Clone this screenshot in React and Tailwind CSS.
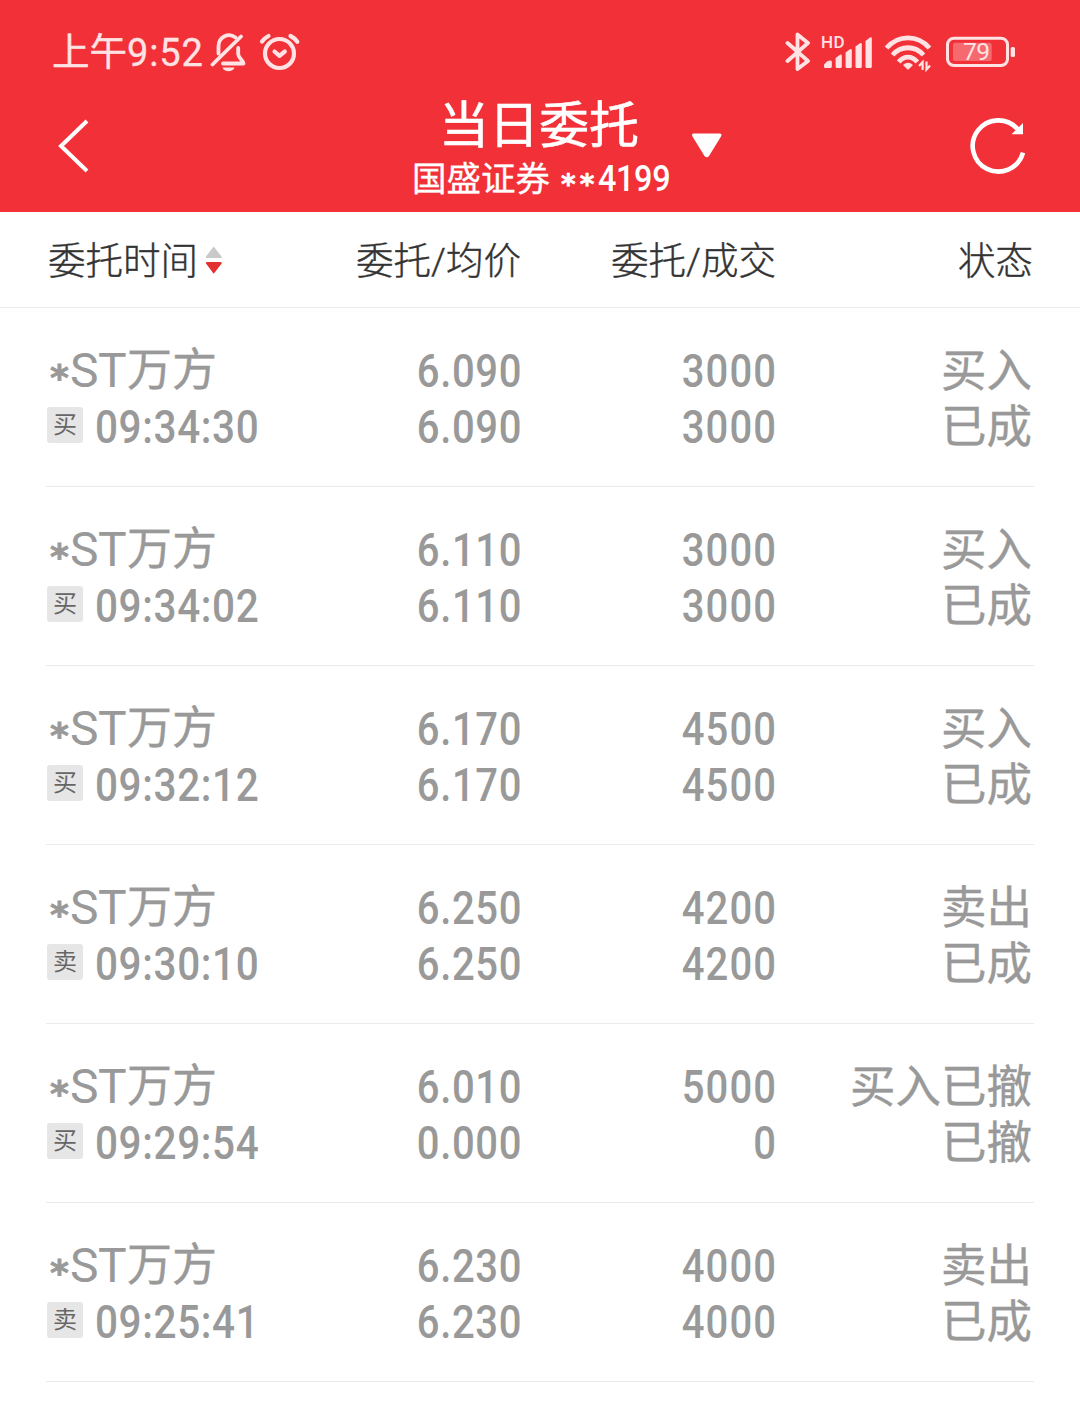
const orders = [
  { prefix: "ST", name: "万方", tag: "买", time: "09:34:30", price: "6.090", avg: "6.090", amount: "3000", filled: "3000", side: "买入", status: "已成" },
  { prefix: "ST", name: "万方", tag: "买", time: "09:34:02", price: "6.110", avg: "6.110", amount: "3000", filled: "3000", side: "买入", status: "已成" },
  { prefix: "ST", name: "万方", tag: "买", time: "09:32:12", price: "6.170", avg: "6.170", amount: "4500", filled: "4500", side: "买入", status: "已成" },
  { prefix: "ST", name: "万方", tag: "卖", time: "09:30:10", price: "6.250", avg: "6.250", amount: "4200", filled: "4200", side: "卖出", status: "已成" },
  { prefix: "ST", name: "万方", tag: "买", time: "09:29:54", price: "6.010", avg: "0.000", amount: "5000", filled: "0", side: "买入已撤", status: "已撤" },
  { prefix: "ST", name: "万方", tag: "卖", time: "09:25:41", price: "6.230", avg: "6.230", amount: "4000", filled: "4000", side: "卖出", status: "已成" },
]

const StatusBar = () => (
  <div className="flex h-[104px] items-center pl-[52px] pr-[64px] text-[#ffe3e4]">
    <div className="flex w-[158px] items-center whitespace-nowrap leading-none">
      <span className="mt-[2px] text-[37.5px] [-webkit-text-stroke:0.4px]">上午</span>
      <span className="mt-[2px] text-[38px] tracking-[0.9px] [-webkit-text-stroke:0.3px]">9:52</span>
    </div>
    <svg className="h-[40px] w-[36px]" viewBox="210 32 36 40" fill="none" stroke="currentColor" strokeWidth="3.8" strokeLinecap="round">
      <path d="M212.500 64.500 241 36.500" />
      <path d="M218.500 53.500V46.500C218.500 36 229 32.500 235.500 37.500" />
      <path d="M238.200 48v6c0 4 4.800 6 5.300 9.500H223" strokeLinejoin="round" />
      <path d="M222.500 67.500h12c-1.500 5-10.500 5-12 0z" fill="currentColor" stroke="none" />
    </svg>
    <svg className="ml-[13px] h-[40px] w-[42px]" viewBox="259 32 42 40" fill="none" stroke="currentColor" strokeWidth="4.2" strokeLinecap="round">
      <circle cx="279.500" cy="53.500" r="14.500" />
      <path d="M274.500 51.500l5 4.300 5.300-4.300" strokeLinejoin="round" />
      <path d="M262 41.500c1.800-2.500 4-4.200 6.500-5.500M290.500 36c2.700 1.300 5 3.200 6.800 5.700" />
    </svg>

    <svg className="ml-auto h-[40px] w-[26px]" viewBox="785 32 26 40" fill="none" stroke="currentColor" strokeWidth="3.8" strokeLinecap="round" strokeLinejoin="round">
      <path d="M787.500 43l20.500 18-10.500 8V34.500L808 43l-20.500 18" />
    </svg>
    <div className="relative ml-[11px] h-[40px] w-[50px]">
      <span className="absolute left-[-1px] top-[2px] text-[17px] font-medium leading-none tracking-[0.4px]">HD</span>
      <svg className="h-full w-full" viewBox="822 32 50 40" fill="currentColor">
        <path d="M824 64.500 827 61.500Q831.800 59.500 831.800 62V66.500Q831.800 68 830.300 68H825.300Q824 68 824 66.500z" />
        <path d="M835.600 58 840 54.800Q841.800 54 841.800 56V66.500Q841.800 68 840.300 68H837Q835.600 68 835.600 66.500z" />
        <path d="M845.600 52.500 850 49.200Q851.800 48.300 851.800 50.300V66.500Q851.800 68 850.300 68H847Q845.600 68 845.600 66.500z" />
        <path d="M855.500 46.500 860 43.200Q861.800 42.300 861.800 44.300V66.500Q861.800 68 860.300 68H857Q855.500 68 855.500 66.500z" />
        <path d="M865.500 41 870 37.600Q871.800 36.700 871.800 38.700V66.500Q871.800 68 870.300 68H867Q865.500 68 865.500 66.500z" />
      </svg>
    </div>
    <svg className="ml-[12px] h-[40px] w-[48px]" viewBox="884 32 48 40" fill="none" stroke="currentColor" strokeWidth="4.8">
      <path d="M886.500 48C898.500 34.500 917.500 34.500 929.500 48" />
      <path d="M892.500 55C901 45.300 915 45.300 923.500 55" />
      <path d="M898.700 62C904 55.500 912 55.500 917.300 62" />
      <path d="M903 65q5-4.500 10 0l-4 4q-1 1-2 0z" fill="currentColor" stroke="none" />
      <path d="M922.600 70V62l-3.600 4M926.500 61.500V69.500l3.600-4" strokeWidth="2.200" />
    </svg>
    <div className="relative ml-[14px] flex h-[40px] w-[70px] items-center">
      <svg className="absolute inset-0 h-full w-full" viewBox="946 32 70 40" fill="none">
        <rect x="947.500" y="38.200" width="60" height="27.300" rx="6.500" stroke="currentColor" strokeWidth="3" />
        <rect x="953" y="42.700" width="38.700" height="18.300" rx="2" fill="white" fillOpacity="0.28" />
        <rect x="1010.700" y="47" width="4.300" height="10" rx="1.500" fill="currentColor" />
      </svg>
      <span className="relative w-full pl-[17px] pt-px text-[24.5px] leading-none tracking-[-0.6px]">79</span>
    </div>
  </div>
)

const Header = () => (
  <div className="grid h-[108px] grid-cols-[412px_260px_1fr] text-white">
    <div className="pl-[58px] pt-[14px]">
      <svg className="h-[56px] w-[32px]" viewBox="58 118 32 56" fill="none" stroke="currentColor" strokeWidth="4">
        <path d="M87 121 61 146l26 25" />
      </svg>
    </div>
    <div className="flex flex-col items-center whitespace-nowrap">
      <h1 className="mt-[-4px] h-[52px] pr-[6px] text-[50px] font-normal leading-[52px] [-webkit-text-stroke:0.6px]">当日委托</h1>
      <div className="mt-[8px] flex h-[38px] w-full items-center text-[34.5px] leading-[38px]">
        <span className="[-webkit-text-stroke:0.3px]">国盛证券</span>
        <span className="ml-[11px] w-[37px] translate-y-[6px] font-['DejaVu_Sans'] text-[28px] font-bold tracking-[4.2px] [-webkit-text-stroke:0.6px]">**</span>
        <span className="origin-left scale-x-90 text-[36px] font-medium tracking-[-0.4px]">4199</span>
      </div>
    </div>
    <div className="flex pl-[19px] pr-[53px]">
      <svg className="mt-[27px] h-[28px] w-[32px]" viewBox="691 131 32 28" fill="currentColor">
        <path d="M694 133.500H719.500Q722.500 133.500 721 136.500L709 156Q706.800 158.500 704.500 156L692.500 136.500Q691 133.500 694 133.500z" />
      </svg>
      <svg className="ml-auto mt-[12px] h-[60px] w-[60px]" viewBox="967 116 60 60" fill="none">
        <path d="M1023 152.700A25.600 25.600 0 1 1 1017.500 129" stroke="currentColor" strokeWidth="4.600" />
        <path d="M1023 123v11.300H1011.500z" fill="currentColor" />
      </svg>
    </div>
  </div>
)

const TableHead = () => (
  <div className="grid h-[96px] grid-cols-[220px_255px_255px_1fr] items-center border-b border-[#ebebeb] pl-[46px] pr-[47px] pt-[4px] text-right text-[37.5px] font-light text-[#333] [-webkit-text-stroke:0.4px]">
    <div className="flex items-center pl-[2px]">
      <span>委托时间</span>
      <svg className="mt-[-4px] ml-[7px] h-[30px] w-[18px]" viewBox="205 244 18 30">
        <path d="M213.700 245.500 221.500 255.500Q222 257 220.500 257H207Q205.500 257 206 255.500z" fill="#c9c9c9" />
        <path d="M213.700 272.800 221.700 262.500Q222 261 220.500 261H207Q205.500 261 206 262.500z" fill="#e4302f" />
      </svg>
    </div>
    <span>委托/均价</span>
    <span>委托/成交</span>
    <span>状态</span>
  </div>
)

const OrderRow = ({ order }) => (
  <div className="mx-[46px] grid h-[179px] grid-cols-[221px_255px_255px_1fr] border-b border-[#ebebeb] pt-[35px] text-right text-[45.5px] leading-[56px] text-[#999]">
    <div className="text-left">
      <div className="flex h-[56px] items-center whitespace-nowrap">
        <span className="ml-[4px] w-[20px] translate-y-[7px] font-['DejaVu_Sans'] text-[36px] font-bold [-webkit-text-stroke:0.8px]">*</span>
        <span className="w-[57px] text-[48px] tracking-[-0.5px]">{order.prefix}</span>
        <span className="mt-[-1px] text-[45px] [-webkit-text-stroke:0.4px]">{order.name}</span>
      </div>
      <div className="flex h-[56px] items-center whitespace-nowrap">
        <span className="ml-px mt-[-5px] flex size-[36px] shrink-0 items-center justify-center rounded-[3px] bg-[#e6e6e6] text-[24px] leading-none text-[#666]">{order.tag}</span>
        <span className="ml-[12px] origin-left scale-x-[0.88] text-[46px] font-medium tracking-[0.7px]">{order.time}</span>
      </div>
    </div>
    <div className="origin-right scale-x-[0.87] text-[46px] font-medium tracking-[0.7px]">
      <div>{order.price}</div>
      <div>{order.avg}</div>
    </div>
    <div className="origin-right scale-x-[0.87] text-[46px] font-medium tracking-[1.2px]">
      <div>{order.amount}</div>
      <div>{order.filled}</div>
    </div>
    <div className="mt-px whitespace-nowrap pr-[2px] [-webkit-text-stroke:0.4px]">
      <div>{order.side}</div>
      <div>{order.status}</div>
    </div>
  </div>
)

const App = () => {
  return (
    <div className="h-[1404px] w-[1080px] overflow-hidden bg-white font-[Roboto,'Noto_Sans_CJK_SC',sans-serif]">
      <div className="h-[212px] bg-[#f23038]">
        <StatusBar />
        <Header />
      </div>
      <TableHead />
      {orders.map((order) => (
        <OrderRow key={order.time} order={order} />
      ))}
    </div>
  )
}

export default App
